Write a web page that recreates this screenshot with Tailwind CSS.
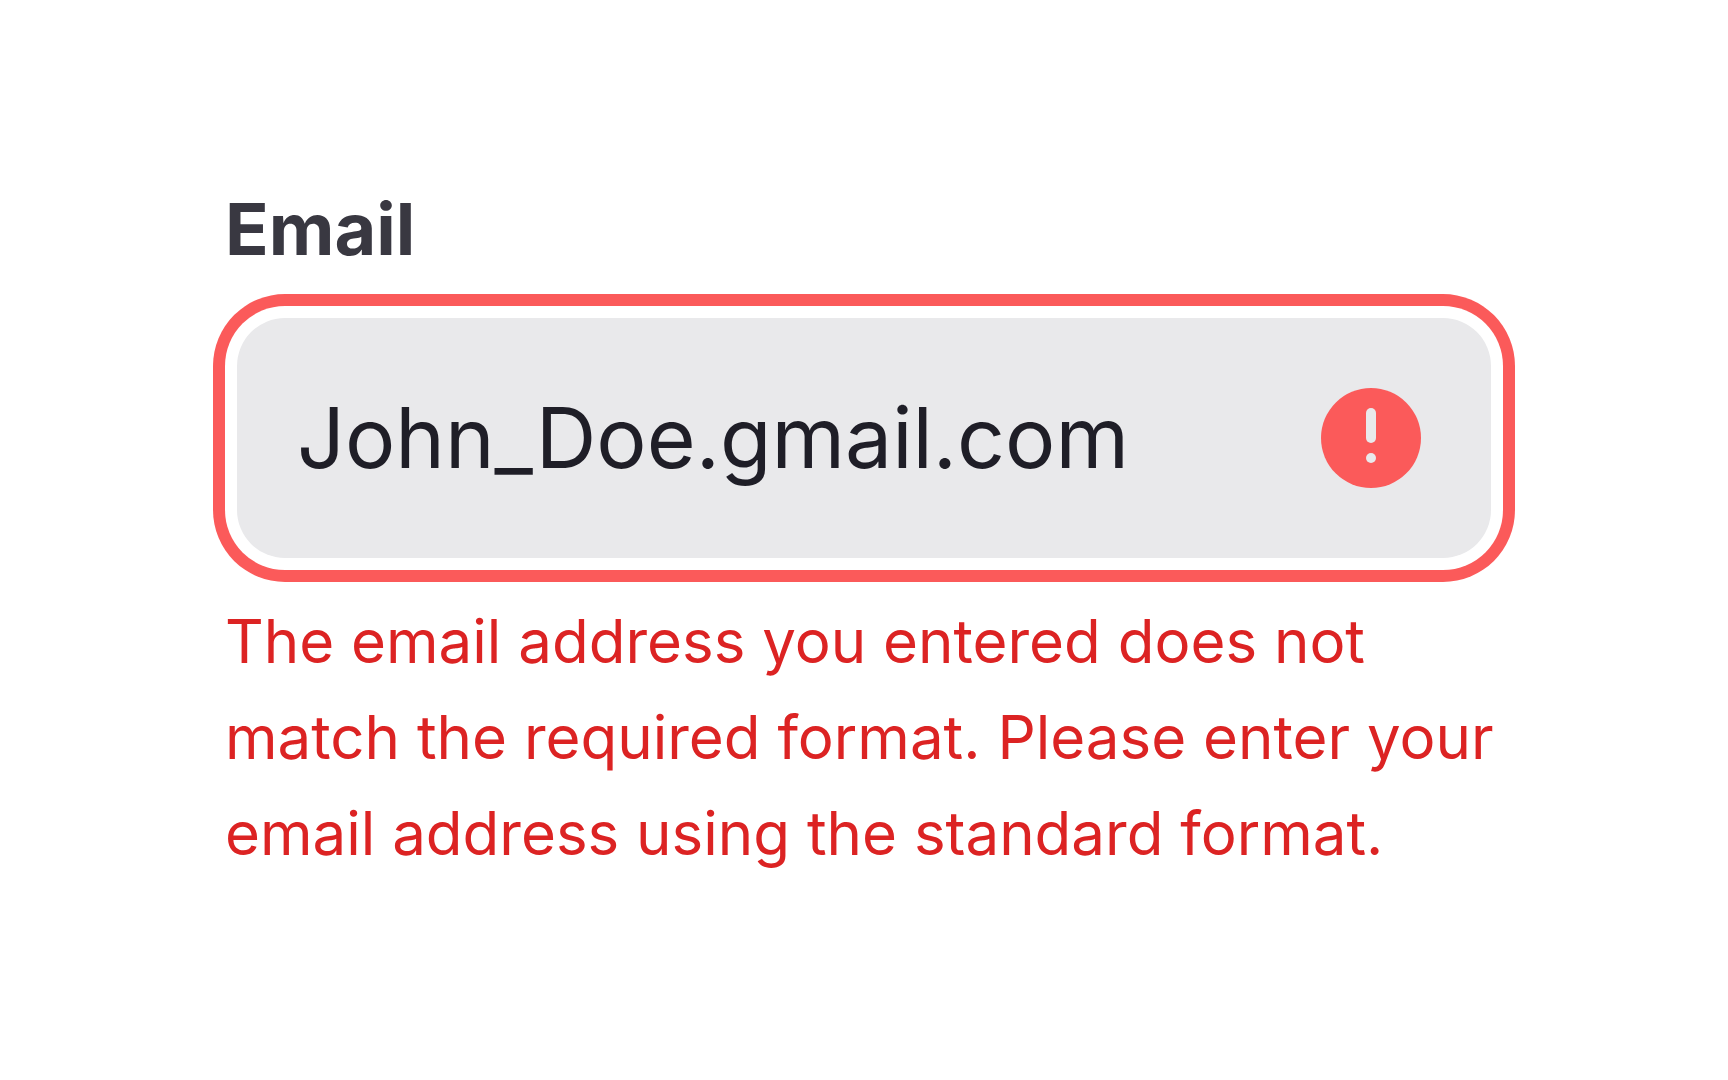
<!DOCTYPE html>
<html lang="en">
<head>
    <meta charset="UTF-8">
    <meta name="viewport" content="width=device-width, initial-scale=1.0">
    <title>Email</title>
    <script src="https://cdn.jsdelivr.net/npm/@tailwindcss/browser@4"></script>
</head>
<body class="bg-white font-['Inter',sans-serif]">
    <main class="max-w-[1278px] mx-auto pt-[181px] pb-20">
        <label for="email" class="block text-[72px] leading-24 font-bold text-[#393841]">Email</label>

        <div class="flex items-center mx-3 mt-[41px] h-60 px-15 rounded-[48px] bg-[#e9e9eb] ring-12 ring-[#fb5a5a] ring-offset-12 ring-offset-white">
            <input id="email" type="text" value="John_Doe.gmail.com" aria-invalid="true" aria-describedby="email-error" class="flex-1 min-w-0 h-30 text-[84px] text-[#1f1e27] bg-transparent outline-none">
            <svg class="size-30 shrink-0" viewBox="0 0 24 24" aria-hidden="true">
                <circle cx="12" cy="12" r="10" fill="#fb5a5a"/>
                <rect x="11" y="6" width="2" height="7" rx="1" fill="#e9e9eb"/>
                <circle cx="12" cy="16" r="1" fill="#e9e9eb"/>
            </svg>
        </div>

        <p id="email-error" class="mt-[35px] text-[60px] leading-24 text-[#dc2323]">The email address you entered does not match the required format. Please enter your email address using the standard format.</p>
    </main>
</body>
</html>
